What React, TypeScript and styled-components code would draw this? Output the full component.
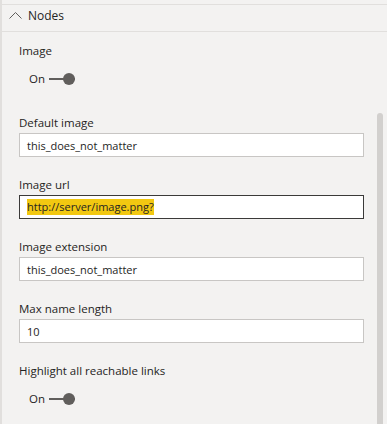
import styled, { createGlobalStyle } from "styled-components";

const GlobalStyle = createGlobalStyle`
  html, body {
    margin: 0;
    padding: 0;
    background: #f3f2f1;
  }
  body {
    font-family: "Open Sans", "Noto Sans", sans-serif;
    color: #252423;
  }
`;

const Pane = styled.div`
  position: relative;
  width: 387px;
  height: 424px;
  overflow: hidden;
  background: #f3f2f1;
  border-left: 2px solid #e1dfdd;
  box-sizing: border-box;
`;

const Header = styled.div`
  margin-top: 4px;
  height: 26px;
  box-sizing: content-box;
  border-top: 1px solid #e1dfdd;
  border-bottom: 1px solid #e1dfdd;
  display: flex;
  align-items: flex-start;
  gap: 6px;
  padding-left: 7px;
  font-size: 12px;
  line-height: 17px;
  color: #252423;
  svg {
    margin-top: 6px;
  }
  span {
    margin-top: 2px;
  }
`;

const Body = styled.div`
  display: flex;
  flex-direction: column;
  padding: 10px 0 0 17px;
  width: 345px;
`;

const Field = styled.div<{ $gap?: number }>`
  display: flex;
  flex-direction: column;
  margin-bottom: ${(p) => p.$gap ?? 19}px;
`;

const Label = styled.div`
  font-size: 11.5px;
  line-height: 17px;
  height: 17px;
  margin-bottom: 2px;
`;

const Input = styled.div<{ $focused?: boolean }>`
  height: 24px;
  box-sizing: border-box;
  background: #ffffff;
  border: 1px solid ${(p) => (p.$focused ? "#3b3a39" : "#c8c6c4")};
  display: flex;
  align-items: center;
  padding-left: 7px;
  font-size: 11px;
`;

const Selected = styled.span`
  background: #f2c811;
  line-height: 16px;
`;

const Toggle = styled.div`
  display: flex;
  align-items: center;
  height: 20px;
  padding-left: 10px;
  font-size: 11.5px;
  gap: 4px;
  margin-top: 7px;
`;

const Track = styled.div`
  position: relative;
  width: 26px;
  height: 2px;
  background: #605e5c;
  margin-top: 1px;
`;

const Knob = styled.div`
  position: absolute;
  right: 0;
  top: -5px;
  width: 12px;
  height: 12px;
  border-radius: 50%;
  background: #605e5c;
`;

const Scrollbar = styled.div`
  position: absolute;
  right: 4px;
  top: 113px;
  bottom: 0;
  width: 6px;
  border-radius: 3px 3px 0 0;
  background: #d2d0ce;
`;

const Chevron = () => (
  <svg width="13" height="8" viewBox="0 0 13 8">
    <path d="M0.5 7.5 L6.5 1.5 L12.5 7.5" fill="none" stroke="#605e5c" strokeWidth="1" />
  </svg>
);

const Switch = () => (
  <Toggle>
    <span>On</span>
    <Track>
      <Knob />
    </Track>
  </Toggle>
);

export default function App() {
  return (
    <Pane>
      <GlobalStyle />
      <Header>
        <Chevron />
        <span>Nodes</span>
      </Header>
      <Body>
        <Field $gap={26}>
          <Label>Image</Label>
          <Switch />
        </Field>
        <Field>
          <Label>Default image</Label>
          <Input>this_does_not_matter</Input>
        </Field>
        <Field>
          <Label>Image url</Label>
          <Input $focused>
            <Selected>http://server/image.png?</Selected>
          </Input>
        </Field>
        <Field>
          <Label>Image extension</Label>
          <Input>this_does_not_matter</Input>
        </Field>
        <Field>
          <Label>Max name length</Label>
          <Input>10</Input>
        </Field>
        <Field>
          <Label>Highlight all reachable links</Label>
          <Switch />
        </Field>
      </Body>
      <Scrollbar />
    </Pane>
  );
}
